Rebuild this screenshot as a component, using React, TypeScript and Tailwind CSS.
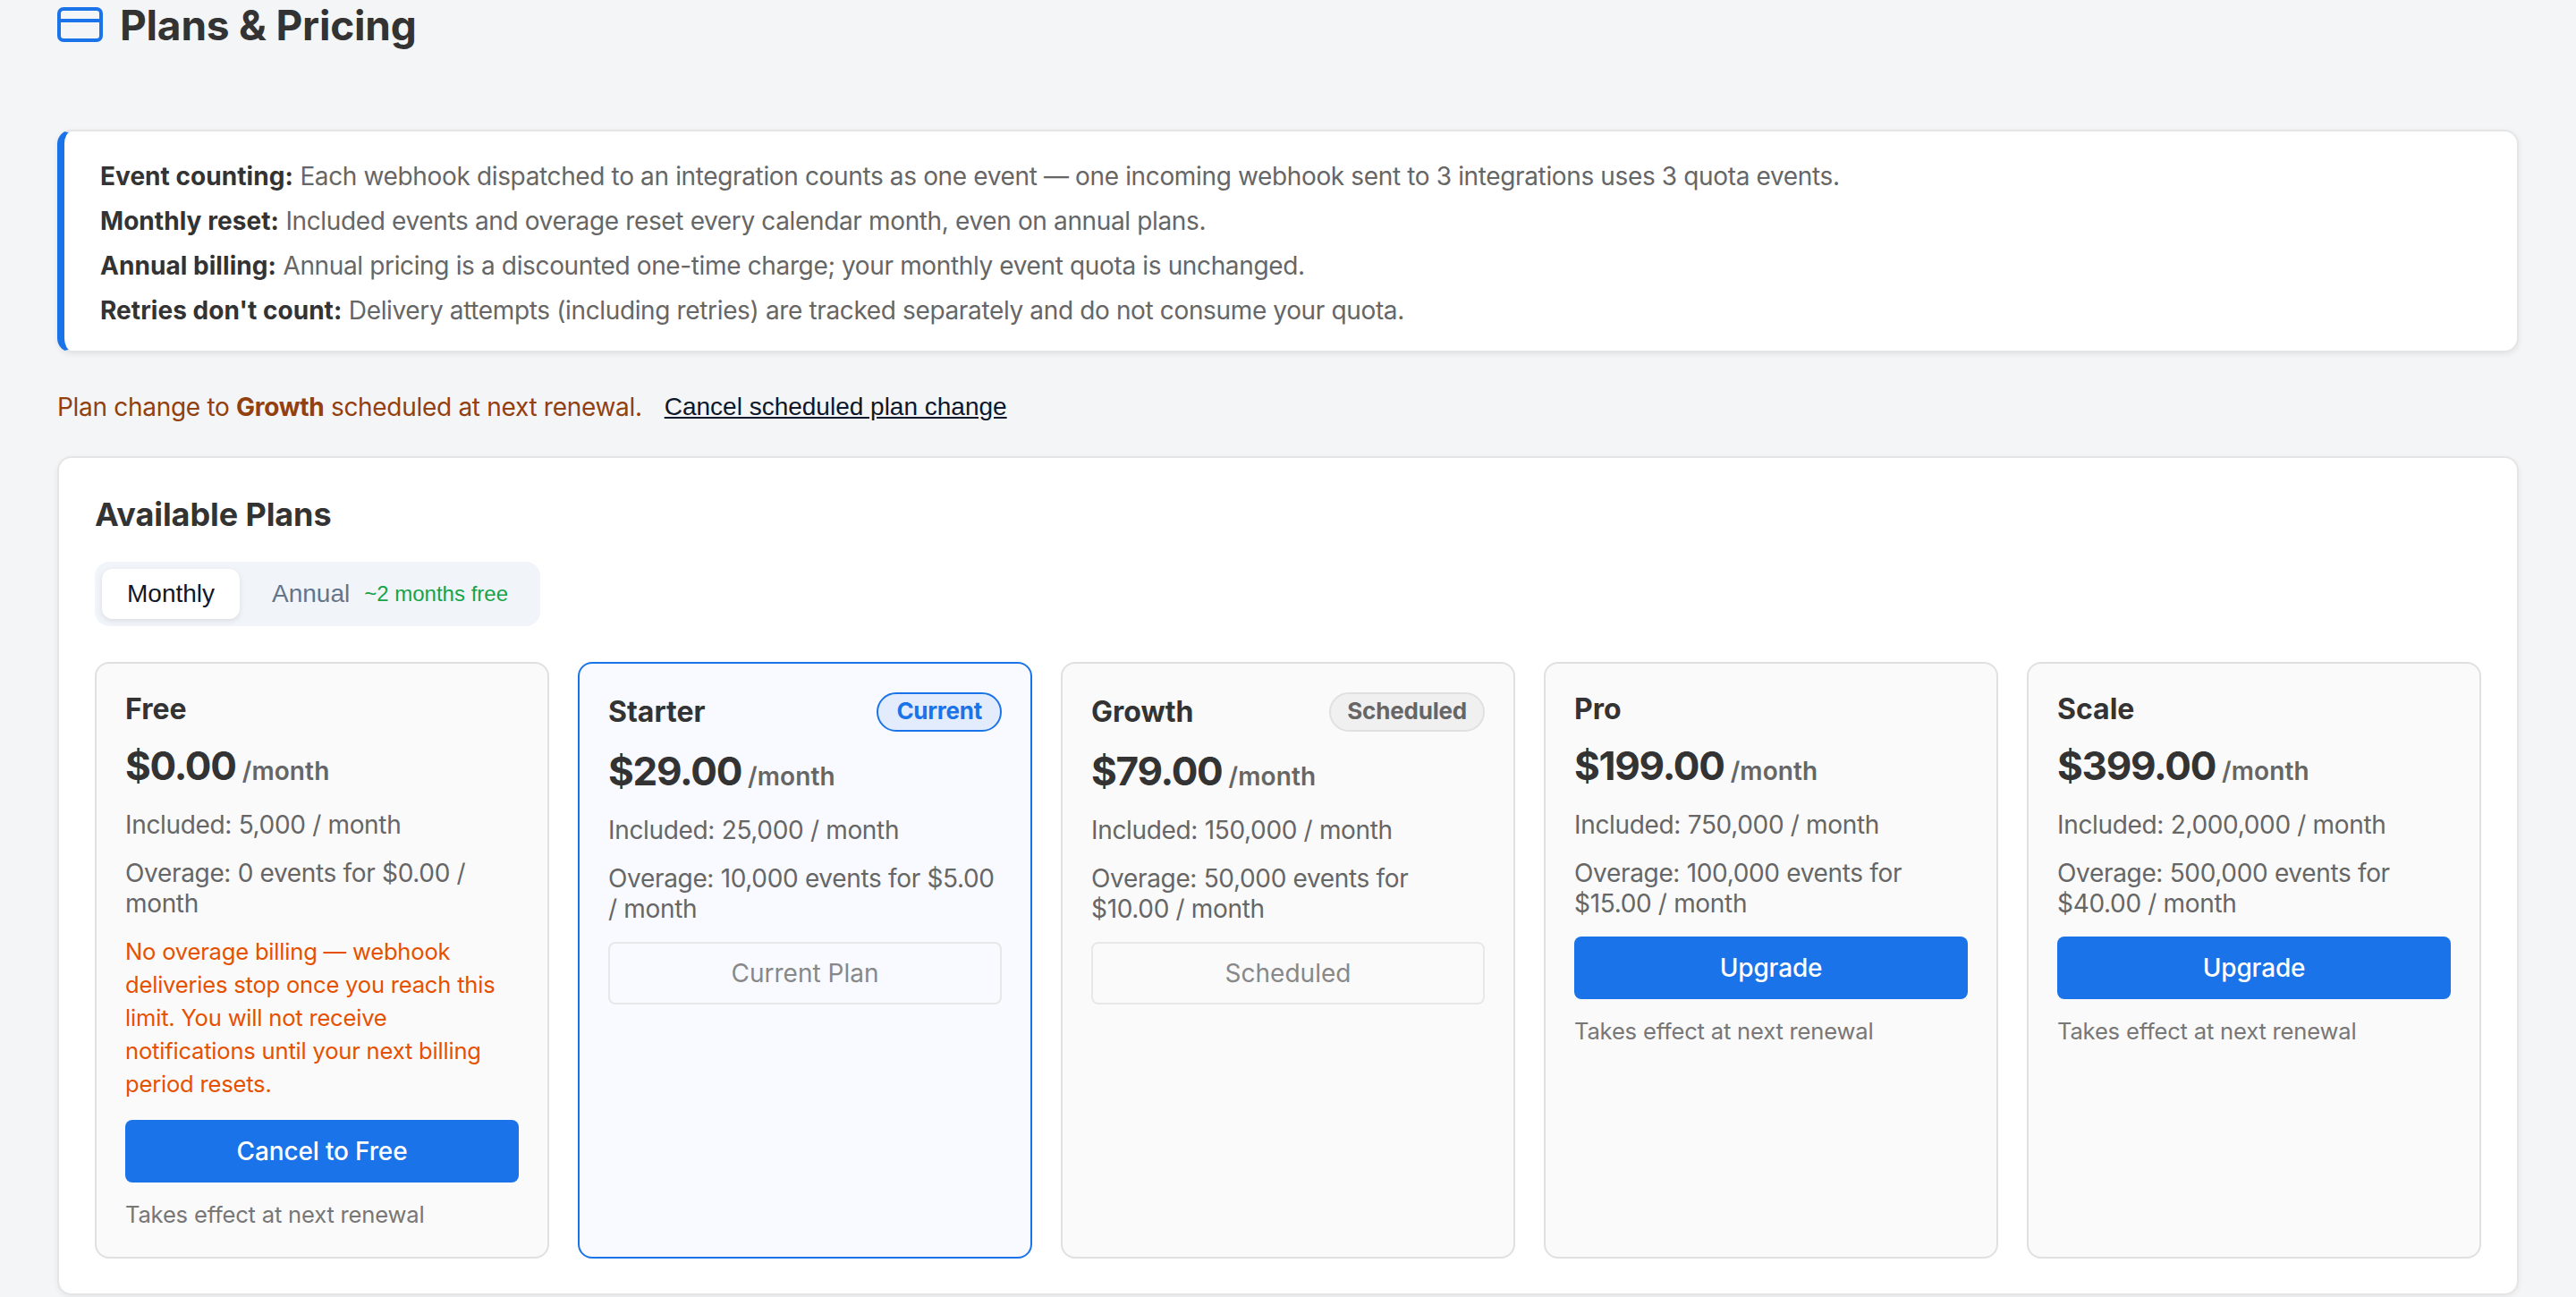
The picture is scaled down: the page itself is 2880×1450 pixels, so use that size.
import React from "react";

type Plan = {
  name: string;
  price: string;
  included: string;
  overage: string;
  badge?: "Current" | "Scheduled";
  warning?: string;
  action: string;
  disabled?: boolean;
  note?: boolean;
};

const plans: Plan[] = [
  {
    name: "Free",
    price: "$0.00",
    included: "Included: 5,000 / month",
    overage: "Overage: 0 events for $0.00 / month",
    warning:
      "No overage billing — webhook deliveries stop once you reach this limit. You will not receive notifications until your next billing period resets.",
    action: "Cancel to Free",
    note: true,
  },
  {
    name: "Starter",
    price: "$29.00",
    included: "Included: 25,000 / month",
    overage: "Overage: 10,000 events for $5.00 / month",
    badge: "Current",
    action: "Current Plan",
    disabled: true,
  },
  {
    name: "Growth",
    price: "$79.00",
    included: "Included: 150,000 / month",
    overage: "Overage: 50,000 events for $10.00 / month",
    badge: "Scheduled",
    action: "Scheduled",
    disabled: true,
  },
  {
    name: "Pro",
    price: "$199.00",
    included: "Included: 750,000 / month",
    overage: "Overage: 100,000 events for $15.00 / month",
    action: "Upgrade",
    note: true,
  },
  {
    name: "Scale",
    price: "$399.00",
    included: "Included: 2,000,000 / month",
    overage: "Overage: 500,000 events for $40.00 / month",
    action: "Upgrade",
    note: true,
  },
];

const rules: [string, string][] = [
  ["Event counting:", "Each webhook dispatched to an integration counts as one event — one incoming webhook sent to 3 integrations uses 3 quota events."],
  ["Monthly reset:", "Included events and overage reset every calendar month, even on annual plans."],
  ["Annual billing:", "Annual pricing is a discounted one-time charge; your monthly event quota is unchanged."],
  ["Retries don't count:", "Delivery attempts (including retries) are tracked separately and do not consume your quota."],
];

function PlanCard({ plan }: { plan: Plan }) {
  const current = plan.badge === "Current";
  return (
    <div
      className={
        current
          ? "flex flex-col rounded-2xl border-2 border-[#1a73e8] bg-[#f8faff] p-8"
          : "flex flex-col rounded-2xl border-2 border-[#e0e0e0] bg-[#fafafa] p-8"
      }
    >
      <div className="flex items-center justify-between">
        <h3 className="text-[32px] leading-[38px] font-bold text-[#333]">{plan.name}</h3>
        {plan.badge === "Current" && (
          <span className="flex h-11 items-center rounded-full border-2 border-[#1a73e8] bg-[#e3ecfd] px-[20px] pb-[3px] text-[26px] font-bold tracking-[-0.25px] text-[#1a73e8]">
            Current
          </span>
        )}
        {plan.badge === "Scheduled" && (
          <span className="flex h-11 items-center rounded-full border-2 border-[#e0e0e0] bg-[#f0f0f0] px-[18px] pb-[3px] text-[26px] font-bold tracking-[-0.2px] text-[#666]">
            Scheduled
          </span>
        )}
      </div>
      <div className="mt-[18px] flex items-baseline gap-[7px]">
        <span className="text-[44px] leading-[53px] font-bold tracking-[-1.25px] text-[#333]">{plan.price}</span>
        <span className="text-[28px] font-semibold tracking-[0.1px] text-[#666]">/month</span>
      </div>
      <p className="mt-[22px] text-[28px] leading-[34px] tracking-[-0.33px] text-[#666]">{plan.included}</p>
      <p className="mt-5 text-[28px] leading-[34px] tracking-[-0.33px] text-[#666]">{plan.overage}</p>
      {plan.warning && (
        <p className="mt-[18px] text-[25.6px] leading-[37px] tracking-[-0.22px] text-[#e65100]">{plan.warning}</p>
      )}
      {plan.disabled ? (
        <button className="mt-5 h-[70px] rounded-lg border-2 border-[#e8e8e8] text-[28px] text-[#888]">
          {plan.action}
        </button>
      ) : (
        <button className={plan.warning ? "mt-[22px] h-[70px] rounded-lg bg-[#1a73e8] text-[28px] font-medium tracking-[-0.15px] text-white" : "mt-5 h-[70px] rounded-lg bg-[#1a73e8] text-[28px] font-medium tracking-[-0.15px] text-white"}>
          {plan.action}
        </button>
      )}
      {plan.note && (
        <p className="mt-5 text-[25.6px] leading-[31px] tracking-[-0.2px] text-[#777]">Takes effect at next renewal</p>
      )}
    </div>
  );
}

export default function App() {
  return (
    <div className="h-[1450px] overflow-hidden bg-[#f4f5f7] px-16 font-[Inter,sans-serif]">
      <div className="flex h-[56px] items-start gap-[19px]">
        <svg width="51" height="39" viewBox="0 0 51 39" fill="none" stroke="#1a73e8" strokeWidth="4" className="mt-2 shrink-0">
          <rect x="2" y="2" width="47" height="35" rx="5" />
          <line x1="2" y1="15" x2="49" y2="15" />
        </svg>
        <h1 className="text-[46px] leading-[56px] font-bold tracking-[-0.2px] text-[#333]">Plans &amp; Pricing</h1>
      </div>

      <div className="mt-[89px] rounded-2xl border-2 border-l-8 border-[#e5e5e5] border-l-[#1a73e8] bg-white pt-[25px] pb-[20px] pl-10 pr-10 text-[28px] leading-[50px] tracking-[-0.36px] text-[#666] shadow-[0_2px_6px_rgba(0,0,0,0.08)]">
        {rules.map(([label, text]) => (
          <p key={label}>
            <strong className="font-bold tracking-[0.05px] text-[#333]">{label}</strong> {text}
          </p>
        ))}
      </div>

      <div className="mt-[44px] flex items-center gap-[25px] text-[28px] leading-[34px]">
        <span className="tracking-[-0.3px] text-[#92400e]">
          Plan change to <strong className="font-bold">Growth</strong> scheduled at next renewal.
        </span>
        <a className="font-['Liberation_Sans',Arial,sans-serif] text-[#0f172a] underline">Cancel scheduled plan change</a>
      </div>

      <div className="mt-[38px] rounded-2xl border-2 border-[#e5e5e5] bg-white px-10 pt-[41px] pb-[39px] shadow-[0_2px_6px_rgba(0,0,0,0.06)]">
        <h2 className="text-[36px] leading-[44px] font-bold tracking-[-0.1px] text-[#333]">Available Plans</h2>
        <div className="mt-[31px] flex h-[72px] w-fit items-center gap-2 rounded-2xl bg-[#f1f5f9] p-2 font-['Liberation_Sans',Arial,sans-serif]">
          <div className="flex h-14 items-center rounded-xl bg-white px-7 text-[28px] text-[#0f172a] shadow-[0_2px_6px_rgba(0,0,0,0.1)]">
            Monthly
          </div>
          <div className="flex h-14 items-center gap-4 rounded-xl px-7 text-[28px] text-[#64748b]">
            Annual
            <span className="text-[24px] text-[#16a34a]">~2 months free</span>
          </div>
        </div>
        <div className="mt-10 grid grid-cols-5 gap-8">
          {plans.map((p) => (
            <PlanCard key={p.name} plan={p} />
          ))}
        </div>
      </div>
    </div>
  );
}
